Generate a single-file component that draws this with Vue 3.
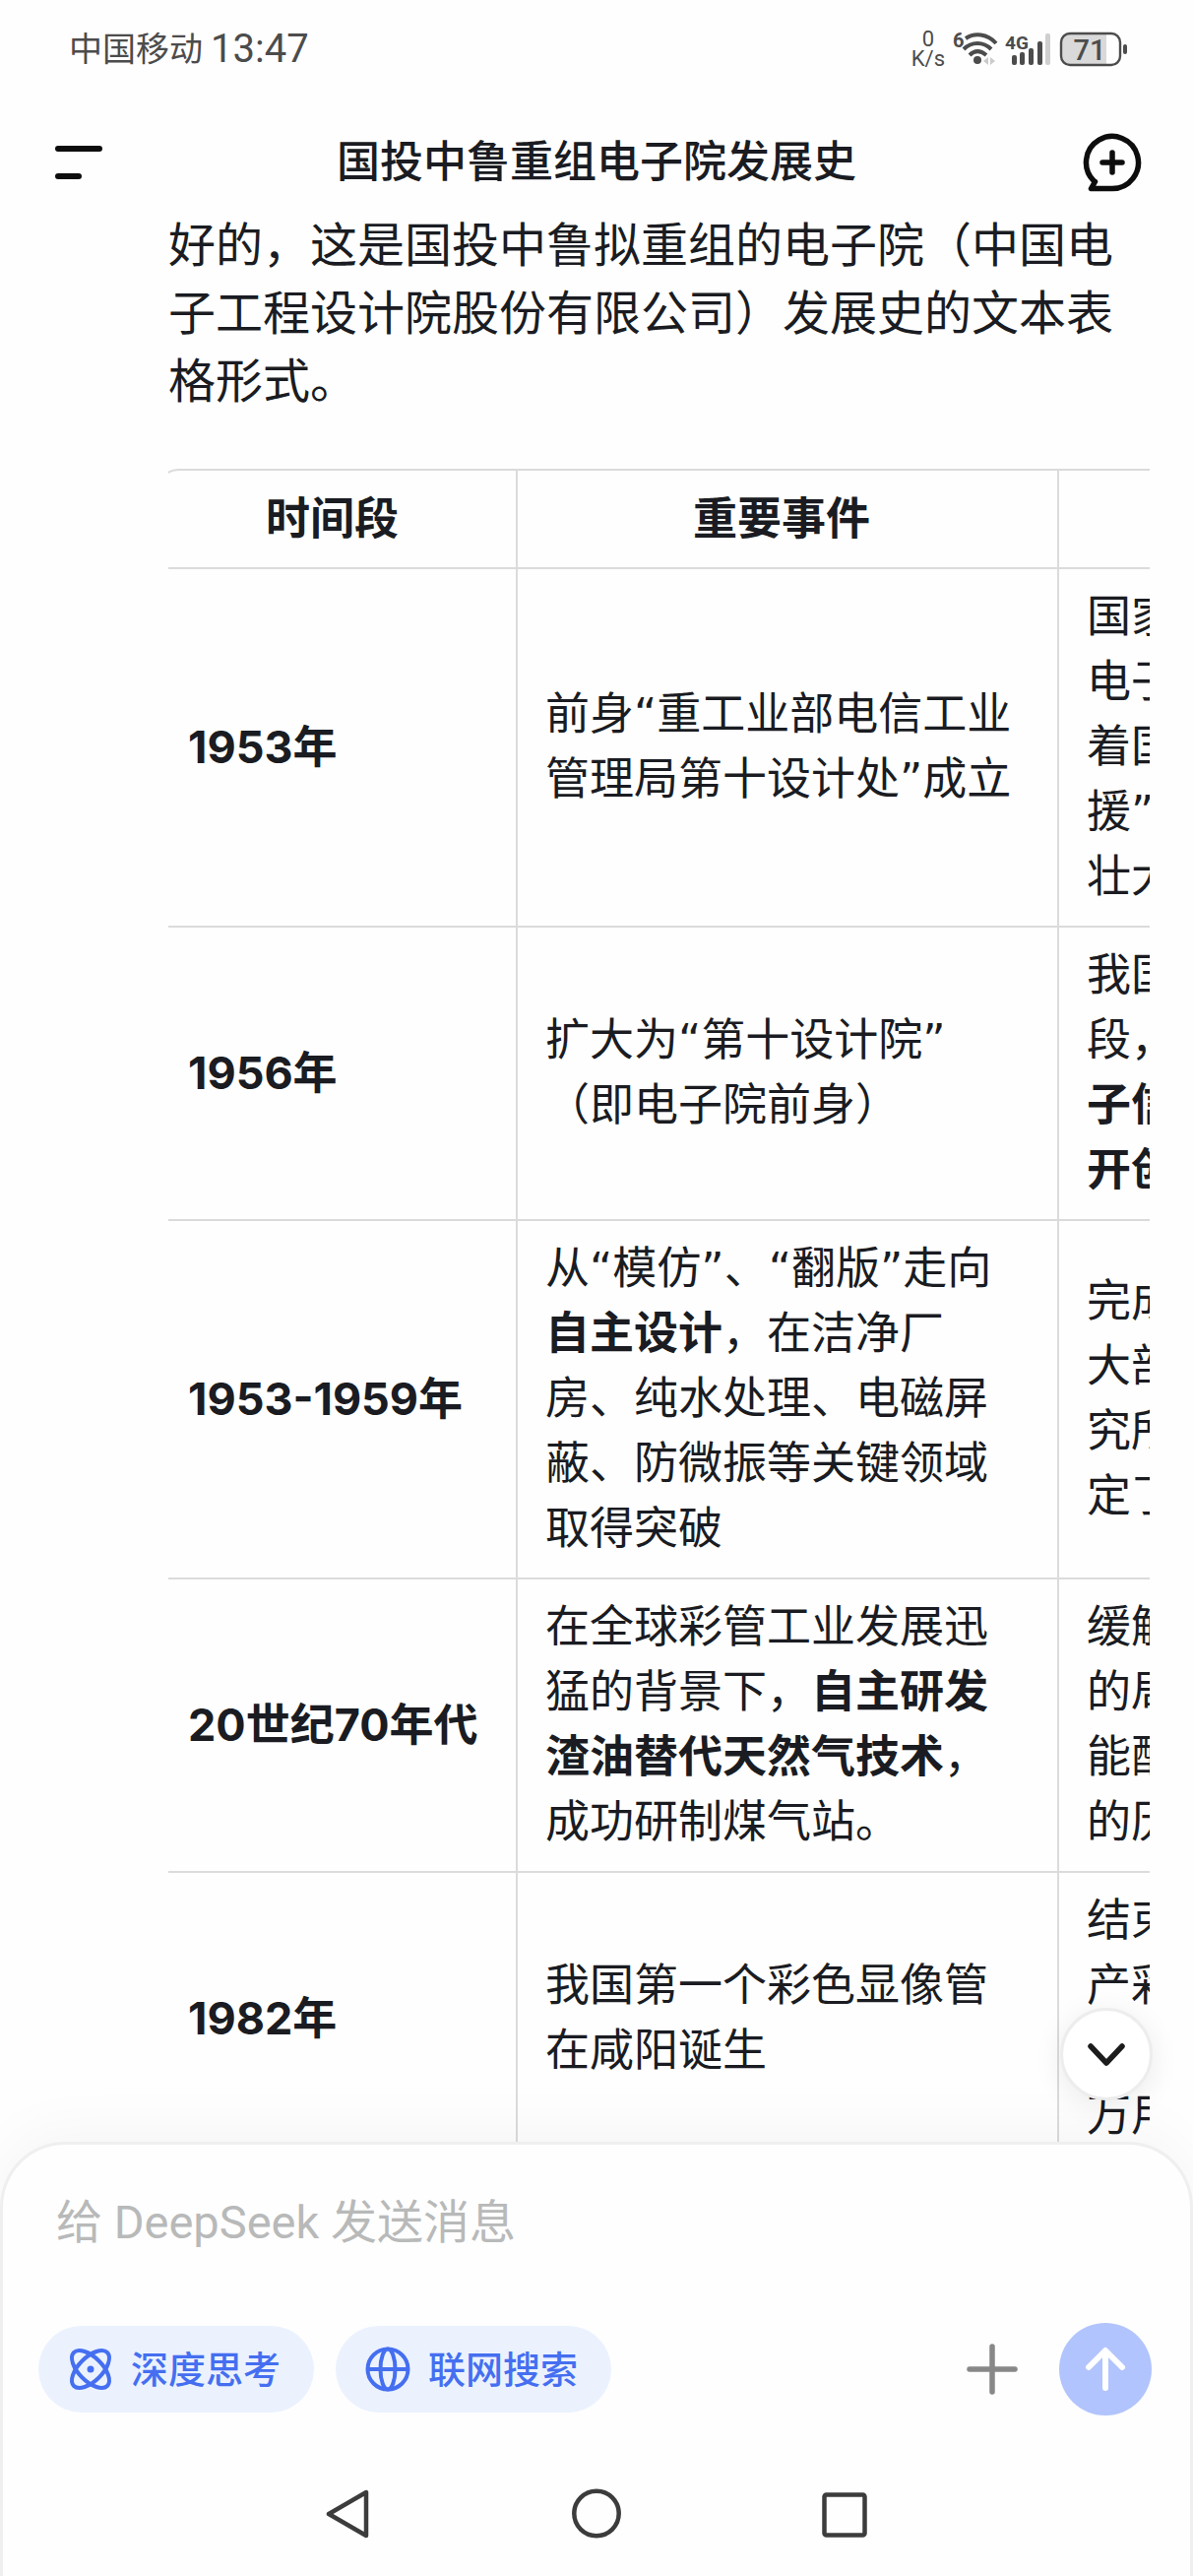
<template>
  <div class="chat-page">
    <!-- 系统状态栏 -->
    <div class="status-bar">
      <div class="status-left">
        <span class="carrier">中国移动</span>
        <span class="clock">13:47</span>
      </div>
      <div class="status-right">
        <div class="net-speed">
          <span>0</span>
          <span>K/s</span>
        </div>
        <svg class="status-icons" width="180" height="38" viewBox="0 0 180 38" aria-hidden="true">
          <text class="tiny" x="2" y="17" font-size="20">6</text>
          <g fill="none" stroke="#4c4c4c" stroke-width="4">
            <path d="M15 8C24 2 37 3 46 13" />
            <path d="M13 19C21 11 33 11 41 19" />
            <path d="M19 25C24 20 30 20 36 25" />
          </g>
          <circle cx="27" cy="30" r="4" fill="#4c4c4c" />
          <path d="M33 31L38 27V35ZM45 31L40 27V35Z" fill="#cbcbcb" />
          <text class="tiny" x="55" y="19" font-size="19">4G</text>
          <g fill="#4c4c4c">
            <rect x="62" y="25" width="5" height="10" rx="2" />
            <rect x="70" y="22" width="5" height="13" rx="2" />
            <rect x="79" y="18" width="5" height="17" rx="2" />
            <rect x="88" y="11" width="5" height="24" rx="2" />
            <rect x="96" y="3" width="5" height="32" rx="2" fill="#cfcfcf" />
          </g>
          <path d="M120 4H158V34H120A7 7 0 0 1 113 27V11A7 7 0 0 1 120 4Z" fill="#d9d9d9" />
          <rect x="112" y="3" width="60" height="32" rx="9" fill="none" stroke="#4c4c4c" stroke-width="2.4" />
          <rect x="175" y="14" width="4" height="10" rx="2" fill="#4c4c4c" />
          <text class="battery" x="141" y="30" font-size="29" text-anchor="middle">71</text>
        </svg>
      </div>
    </div>

    <!-- 标题栏 -->
    <header class="title-bar">
      <button class="icon-btn" type="button" aria-label="菜单">
        <svg width="60" height="60" viewBox="0 0 60 60">
          <path d="M7 16H49M7 44H28" fill="none" stroke="#0d0d0d" stroke-width="6" stroke-linecap="round" />
        </svg>
      </button>
      <h1 class="title">国投中鲁重组电子院发展史</h1>
      <button class="icon-btn" type="button" aria-label="新对话">
        <svg width="60" height="60" viewBox="0 0 60 60">
          <g fill="none" stroke="#0d0d0d" stroke-width="5.5" stroke-linecap="round" stroke-linejoin="round">
            <path d="M30 56.5A26.5 26.5 0 1 0 11.5 49L12.5 49.5L8.5 56.5Z" />
            <path d="M30 20V40M20 30H40" />
          </g>
        </svg>
      </button>
    </header>

    <!-- 消息内容 -->
    <main class="messages">
      <p class="intro">好的，这是国投中鲁拟重组的电子院（中国电子工程设计院股份有限公司）发展史的文本表格形式。</p>
      <div ref="tableScroll" class="table-scroll">
        <table class="history">
          <colgroup>
            <col class="col-time" />
            <col class="col-event" />
            <col class="col-note" />
          </colgroup>
          <thead>
            <tr>
              <th scope="col">时间段</th>
              <th scope="col">重要事件</th>
              <td></td>
            </tr>
          </thead>
          <tbody>
            <tr v-for="row in rows" :key="row.time">
              <th scope="row">{{ row.time }}</th>
              <td class="event">
                <template v-for="(part, i) in row.event" :key="i">
                  <strong v-if="part.bold">{{ part.text }}</strong>
                  <template v-else>{{ part.text }}</template>
                </template>
              </td>
              <td>
                <div v-for="(line, i) in row.note" :key="i" class="note-line" :class="{ bold: line.bold }">{{ line.text }}</div>
              </td>
            </tr>
          </tbody>
        </table>
      </div>
      <button class="to-bottom" type="button" aria-label="回到底部" @click="scrollToBottom">
        <svg width="44" height="32" viewBox="0 0 44 32">
          <path d="M6 8L22 25L38 8" fill="none" stroke="#1c1c1c" stroke-width="5.5" stroke-linecap="round" stroke-linejoin="round" />
        </svg>
      </button>
    </main>

    <!-- 输入区 -->
    <footer class="composer">
      <input v-model="message" class="message-input" type="text" placeholder="给 DeepSeek 发送消息" aria-label="给 DeepSeek 发送消息" />
      <div class="actions">
        <button class="chip" type="button" :aria-pressed="deepThink" @click="deepThink = !deepThink">
          <svg width="46" height="46" viewBox="0 0 46 46">
            <g fill="none" stroke="#456ff0" stroke-width="4">
              <ellipse cx="23" cy="23" rx="24" ry="12" transform="rotate(45 23 23)" />
              <ellipse cx="23" cy="23" rx="24" ry="12" transform="rotate(-45 23 23)" />
            </g>
            <circle cx="23" cy="23" r="3.5" fill="#456ff0" />
          </svg>
          <span>深度思考</span>
        </button>
        <button class="chip" type="button" :aria-pressed="webSearch" @click="webSearch = !webSearch">
          <svg width="46" height="46" viewBox="0 0 46 46">
            <g fill="none" stroke="#456ff0" stroke-width="4">
              <circle cx="23" cy="23" r="20.5" />
              <ellipse cx="23" cy="23" rx="7.5" ry="20.5" />
              <path d="M2.5 23H43.5" />
            </g>
          </svg>
          <span>联网搜索</span>
        </button>
        <button class="icon-btn attach" type="button" aria-label="添加">
          <svg width="52" height="52" viewBox="0 0 52 52">
            <path d="M26 3V49M3 26H49" fill="none" stroke="#888888" stroke-width="5.5" stroke-linecap="round" />
          </svg>
        </button>
        <button class="send" type="button" aria-label="发送">
          <svg width="94" height="94" viewBox="0 0 94 94">
            <path d="M47 66V29M30 45L47 28L64 45" fill="none" stroke="#fff" stroke-width="6" stroke-linecap="round" stroke-linejoin="round" />
          </svg>
        </button>
      </div>
      <nav class="system-nav">
        <button class="icon-btn" type="button" aria-label="返回">
          <svg width="54" height="54" viewBox="0 0 54 54">
            <path d="M46 5V49L8 27Z" fill="none" stroke="#3c3c3c" stroke-width="4.5" stroke-linejoin="round" />
          </svg>
        </button>
        <button class="icon-btn" type="button" aria-label="主页">
          <svg width="54" height="54" viewBox="0 0 54 54">
            <circle cx="28" cy="26.5" r="22.7" fill="none" stroke="#3c3c3c" stroke-width="4.5" />
          </svg>
        </button>
        <button class="icon-btn" type="button" aria-label="最近任务">
          <svg width="54" height="54" viewBox="0 0 54 54">
            <rect x="7.5" y="7.5" width="41" height="41" rx="2" fill="none" stroke="#3c3c3c" stroke-width="4.5" />
          </svg>
        </button>
      </nav>
    </footer>
  </div>
</template>

<script setup>
import { ref, onMounted } from 'vue';

const message = ref('');
const deepThink = ref(true);
const webSearch = ref(true);
const tableScroll = ref(null);

const rows = [
  {
    time: '1953年',
    event: [{ text: '前身“重工业部电信工业管理局第十设计处”成立' }],
    note: [{ text: '国家' }, { text: '电子' }, { text: '着国' }, { text: '援”' }, { text: '壮大' }]
  },
  {
    time: '1956年',
    event: [{ text: '扩大为“第十设计院”\n（即电子院前身）' }],
    note: [{ text: '我国' }, { text: '段，' }, { text: '子信', bold: true }, { text: '开创', bold: true }]
  },
  {
    time: '1953-1959年',
    event: [
      { text: '从“模仿”、“翻版”走向' },
      { text: '自主设计', bold: true },
      { text: '，在洁净厂房、纯水处理、电磁屏蔽、防微振等关键领域取得突破' }
    ],
    note: [{ text: '完成' }, { text: '大部' }, { text: '究所' }, { text: '定了' }]
  },
  {
    time: '20世纪70年代',
    event: [
      { text: '在全球彩管工业发展迅猛的背景下，' },
      { text: '自主研发渣油替代天然气技术', bold: true },
      { text: '，成功研制煤气站。' }
    ],
    note: [{ text: '缓解' }, { text: '的局' }, { text: '能配' }, { text: '的历' }]
  },
  {
    time: '1982年',
    event: [{ text: '我国第一个彩色显像管在咸阳诞生' }],
    note: [{ text: '结束' }, { text: '产彩' }, { text: '' }, { text: '万用' }]
  }
];

const scrollToBottom = () => {
  window.scrollTo({ top: document.body.scrollHeight, behavior: 'smooth' });
};

// 表格初始时已向右滑动一点
onMounted(() => {
  tableScroll.value.scrollLeft = 10;
});
</script>

<style>
body {
  background: #fefefe;
}
</style>

<style scoped>
.chat-page {
  display: flex;
  flex-direction: column;
  height: 100vh;
  overflow: hidden;
  background: #fefefe;
  color: #1a1c22;
  font-family: Inter, "Noto Sans CJK SC", sans-serif;
  text-spacing-trim: space-all;
}

button {
  border: none;
  padding: 0;
  background: none;
  font-family: inherit;
  cursor: pointer;
}

svg {
  display: block;
}

.icon-btn {
  flex: none;
}

.status-bar {
  display: flex;
  flex: none;
  align-items: center;
  justify-content: space-between;
  height: 100px;
  padding: 0 66px 0 70px;
  color: #4c4c4c;
  font-family: Roboto, "Noto Sans CJK SC", sans-serif;
}

.status-left {
  display: flex;
  align-items: center;
  gap: 8px;
}

.carrier {
  font-size: 34px;
  line-height: 40px;
}

.clock {
  font-size: 40px;
  line-height: 40px;
}

.status-right {
  display: flex;
  align-items: center;
  gap: 6px;
}

.net-speed {
  display: flex;
  flex-direction: column;
  align-items: center;
  font-size: 22px;
  line-height: 20px;
}

.status-icons text {
  fill: #4c4c4c;
  font-family: Roboto, sans-serif;
}

.status-icons .tiny {
  font-weight: 700;
}

.status-icons .battery {
  font-weight: 500;
}

.title-bar {
  display: flex;
  flex: none;
  align-items: center;
  justify-content: space-between;
  height: 114px;
  padding: 16px 52px 0;
  box-sizing: border-box;
}

.title {
  margin: 0;
  padding-bottom: 2px;
  font-size: 44px;
  font-weight: 500;
  line-height: 60px;
}

.messages {
  position: relative;
  flex: 1;
  min-height: 0;
  padding: 0 44px 0 171px;
}

.intro {
  margin: 0 0 55px;
  font-size: 48px;
  line-height: 69px;
}

.table-scroll {
  overflow-x: auto;
  scrollbar-width: none;
}

.history {
  width: 1520px;
  table-layout: fixed;
  border: 2px solid #dbdbdb;
  border-radius: 20px;
  border-spacing: 0;
  font-size: 45px;
  line-height: 66px;
}

.col-time {
  width: 363px;
}

.col-event {
  width: 550px;
}

.history th,
.history td {
  padding: 16px 40px 16px 28px;
  border-right: 2px solid #dbdbdb;
  border-bottom: 2px solid #dbdbdb;
  vertical-align: middle;
  text-align: left;
}

.history td {
  font-family: "DejaVu Sans", "Noto Sans CJK SC", sans-serif;
}

.history .event {
  white-space: pre-line;
}

.history thead th {
  text-align: center;
}

.history tbody th {
  white-space: nowrap;
}

.history th:last-child,
.history td:last-child {
  border-right: none;
}

.note-line {
  min-height: 66px;
}

.bold {
  font-weight: 700;
}

.to-bottom {
  position: absolute;
  right: 41px;
  bottom: 42px;
  display: flex;
  align-items: center;
  justify-content: center;
  width: 94px;
  height: 94px;
  border: 3px solid #ededed;
  border-radius: 50%;
  background: #fff;
  box-shadow: 0 6px 30px rgba(0, 0, 0, 0.08);
}

.composer {
  position: relative;
  flex: none;
  padding: 45px 39px 36px 36px;
  border: 3px solid #efefef;
  border-bottom: none;
  border-radius: 66px 66px 0 0;
  background: #fefefe;
  box-shadow: 0 -10px 60px rgba(0, 0, 0, 0.04);
}

.message-input {
  display: block;
  width: 100%;
  height: 66px;
  margin-bottom: 70px;
  padding: 0 18px;
  border: none;
  outline: none;
  box-sizing: border-box;
  background: none;
  color: #1a1c22;
  font-family: Roboto, "Noto Sans CJK SC", sans-serif;
  font-size: 47px;
}

.message-input::placeholder {
  color: #b8b9b9;
  opacity: 1;
}

.actions {
  display: flex;
  align-items: center;
  gap: 22px;
}

.chip {
  display: flex;
  align-items: center;
  gap: 18px;
  height: 88px;
  padding: 0 34px 0 30px;
  border-radius: 44px;
  background: #ebf2fe;
  color: #456ff0;
  font-size: 38px;
  font-weight: 500;
  line-height: 44px;
  white-space: nowrap;
}

.chip svg {
  overflow: visible;
}

.attach {
  margin-left: auto;
  margin-right: 20px;
}

.send {
  width: 94px;
  height: 94px;
  border-radius: 50%;
  background: #b2c4fd;
}

.system-nav {
  display: flex;
  justify-content: center;
  gap: 198px;
  margin-top: 73px;
}
</style>
